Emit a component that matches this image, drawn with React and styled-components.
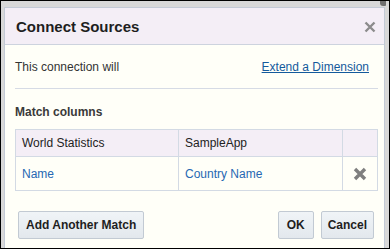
import React from "react";
import styled, { createGlobalStyle } from "styled-components";

const Global = createGlobalStyle`
  html, body { margin: 0; padding: 0; }
  body { font-family: "Liberation Sans", Arial, sans-serif; }
`;

const Frame = styled.div`
  position: relative;
  box-sizing: border-box;
  width: 390px;
  height: 249px;
  border: 1px solid #000;
  background: #d8d8d8;
  padding: 6px 4px 0 3px;
  overflow: hidden;
`;

const Corner = styled.div`
  position: absolute;
  top: 0;
  right: 3px;
  width: 6px;
  height: 5px;
  background: #6e6e6e;
  border-radius: 0 0 1px 3px;
`;

const Dialog = styled.div`
  box-sizing: border-box;
  height: 260px;
  border: 1px solid #c3cad6;
  background: #fffff8;
`;

const Header = styled.div`
  display: flex;
  align-items: center;
  justify-content: space-between;
  height: 36px;
  padding: 0 8px 0 11px;
  background: #f4eef6;
  border-bottom: 1px solid #cdd3de;
`;

const Title = styled.h1`
  margin: 0;
  font-size: 15px;
  font-weight: bold;
  color: #1e1e1e;
`;

const CloseIcon = styled.svg`
  width: 12px;
  height: 12px;
  margin-top: 2px;
`;

const Body = styled.div`
  padding: 0 6px 0 10px;
`;

const InfoRow = styled.div`
  display: flex;
  justify-content: space-between;
  align-items: center;
  height: 43px;
  padding-right: 9px;
  border-bottom: 1px solid #d6dbe5;
  font-size: 12px;
  color: #333;
`;

const Link = styled.a`
  color: #145a9c;
  text-decoration: underline;
  cursor: pointer;
`;

const SectionTitle = styled.div`
  font-size: 12px;
  font-weight: bold;
  color: #3a3a3a;
  padding: 16px 0 10px;
`;

const Table = styled.table`
  width: 363px;
  table-layout: fixed;
  border-collapse: collapse;
  font-size: 12px;
`;

const Th = styled.th`
  text-align: left;
  font-weight: normal;
  color: #222;
  height: 26px;
  padding: 0 0 0 6px;
  background: #f4eef6;
  border: 1px solid #d3dae4;
`;

const Td = styled.td`
  height: 33px;
  padding: 0 0 0 6px;
  color: #2668b3;
  border: 1px solid #d3dae4;
`;

const IconCell = styled.td`
  height: 33px;
  padding: 0;
  border: 1px solid #d3dae4;
`;

const RemoveIcon = styled.svg`
  width: 14px;
  height: 14px;
  display: block;
  margin: 0 auto;
`;

const Footer = styled.div`
  display: flex;
  align-items: center;
  padding: 20px 4px 0 3px;
  gap: 7px;
`;

const Spacer = styled.div`
  flex: 1;
`;

const Button = styled.button`
  box-sizing: border-box;
  height: 28px;
  padding: 0 ${(p) => p.$pad}px;
  font-family: "Liberation Sans", Arial, sans-serif;
  font-size: 12px;
  font-weight: bold;
  color: #1e1e1e;
  background: linear-gradient(#f0f4f7, #e3e8ed);
  border: 1px solid #c2cad3;
  border-radius: 2px;
`;

export default function App() {
  return (
    <>
      <Global />
      <Frame>
        <Corner />
        <Dialog>
          <Header>
            <Title>Connect Sources</Title>
            <CloseIcon viewBox="0 0 12 12">
              <path d="M1.5 1.5 L10.5 10.5 M10.5 1.5 L1.5 10.5" stroke="#8c8c8c" strokeWidth="2.4" />
            </CloseIcon>
          </Header>
          <Body>
            <InfoRow>
              <span>This connection will</span>
              <Link>Extend a Dimension</Link>
            </InfoRow>
            <SectionTitle>Match columns</SectionTitle>
            <Table>
              <colgroup>
                <col style={{ width: 163 }} />
                <col style={{ width: 164 }} />
                <col style={{ width: 35 }} />
              </colgroup>
              <thead>
                <tr>
                  <Th>World Statistics</Th>
                  <Th>SampleApp</Th>
                  <Th></Th>
                </tr>
              </thead>
              <tbody>
                <tr>
                  <Td>Name</Td>
                  <Td>Country Name</Td>
                  <IconCell>
                    <RemoveIcon viewBox="0 0 14 14">
                      <path d="M2 2 L12 12 M12 2 L2 12" stroke="#7f7f7f" strokeWidth="3.4" />
                    </RemoveIcon>
                  </IconCell>
                </tr>
              </tbody>
            </Table>
            <Footer>
              <Button $pad={7}>Add Another Match</Button>
              <Spacer />
              <Button $pad={8}>OK</Button>
              <Button $pad={6}>Cancel</Button>
            </Footer>
          </Body>
        </Dialog>
      </Frame>
    </>
  );
}
